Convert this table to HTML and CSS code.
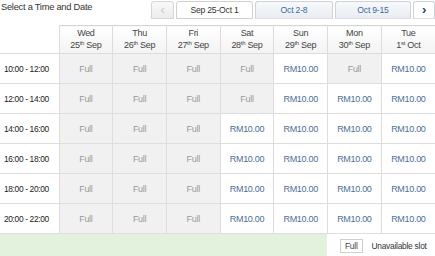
FILE: index.html
```html
<!DOCTYPE html>
<html>
<head>
<meta charset="utf-8">
<link rel="stylesheet" href="styles.css">
</head>
<body>
<div class="top">
  <div class="title">Select a Time and Date</div>
  <div class="tabs">
    <div class="tab arrow prev">&#x2039;</div>
    <div class="tab active wk1">Sep 25-Oct 1</div>
    <div class="tab wk2">Oct 2-8</div>
    <div class="tab wk3">Oct 9-15</div>
    <div class="tab arrow next">&#x203A;</div>
  </div>
</div>
<table class="grid">
  <colgroup><col class="c-time"><col><col><col><col><col><col><col></colgroup>
  <thead>
    <tr>
      <th class="blank"></th>
      <th>Wed<br>25<sup>th</sup> Sep</th>
      <th>Thu<br>26<sup>th</sup> Sep</th>
      <th>Fri<br>27<sup>th</sup> Sep</th>
      <th>Sat<br>28<sup>th</sup> Sep</th>
      <th>Sun<br>29<sup>th</sup> Sep</th>
      <th>Mon<br>30<sup>th</sup> Sep</th>
      <th>Tue<br>1<sup>st</sup> Oct</th>
    </tr>
  </thead>
  <tbody>
    <tr><td class="time">10:00 - 12:00</td><td class="full">Full</td><td class="full">Full</td><td class="full">Full</td><td class="full">Full</td><td class="price">RM10.00</td><td class="full">Full</td><td class="price">RM10.00</td></tr>
    <tr><td class="time">12:00 - 14:00</td><td class="full">Full</td><td class="full">Full</td><td class="full">Full</td><td class="full">Full</td><td class="price">RM10.00</td><td class="price">RM10.00</td><td class="price">RM10.00</td></tr>
    <tr><td class="time">14:00 - 16:00</td><td class="full">Full</td><td class="full">Full</td><td class="full">Full</td><td class="price">RM10.00</td><td class="price">RM10.00</td><td class="price">RM10.00</td><td class="price">RM10.00</td></tr>
    <tr><td class="time">16:00 - 18:00</td><td class="full">Full</td><td class="full">Full</td><td class="full">Full</td><td class="price">RM10.00</td><td class="price">RM10.00</td><td class="price">RM10.00</td><td class="price">RM10.00</td></tr>
    <tr><td class="time">18:00 - 20:00</td><td class="full">Full</td><td class="full">Full</td><td class="full">Full</td><td class="price">RM10.00</td><td class="price">RM10.00</td><td class="price">RM10.00</td><td class="price">RM10.00</td></tr>
    <tr><td class="time">20:00 - 22:00</td><td class="full">Full</td><td class="full">Full</td><td class="full">Full</td><td class="price">RM10.00</td><td class="price">RM10.00</td><td class="price">RM10.00</td><td class="price">RM10.00</td></tr>
  </tbody>
</table>
<div class="footer">
  <div class="green"></div>
  <div class="legend">
    <span class="legend-box">Full</span>
    <span class="legend-text">Unavailable slot</span>
  </div>
</div>
</body>
</html>
```

FILE: styles.css
```css
html, body {
  margin: 0;
  padding: 0;
  background: #fff;
  width: 435px;
  height: 256px;
  overflow: hidden;
  font-family: "Liberation Sans", Arial, sans-serif;
}

.top {
  display: flex;
  height: 25px;
}

.title {
  font-size: 9.3px;
  letter-spacing: -0.25px;
  color: #333;
  padding: 2px 0 0 1px;
}

.tabs {
  margin-left: auto;
  display: flex;
  gap: 2px;
  padding-top: 1px;
}

.tab {
  height: 16px;
  line-height: 16px;
  border: 1px solid #cfd3d8;
  border-bottom-color: #dde;
  border-radius: 3px 3px 0 0;
  font-size: 8.6px;
  letter-spacing: -0.2px;
  text-align: center;
  color: #3d6a9e;
  background: linear-gradient(#f7f9fb, #e9edf3);
  box-sizing: content-box;
}

.tab.active {
  background: #fff;
  color: #333;
  border-color: #d0d0d0;
}

.wk1 { width: 75px; }
.wk2 { width: 76px; }
.wk3 { width: 74px; }

.arrow {
  width: 22px;
  font-size: 13px;
  line-height: 15px;
}

.prev {
  width: 21px;
  color: #c4c8cd;
  background: linear-gradient(#f9f9f9, #ececec);
  border-color: #d6d6d6;
}

.next {
  width: 20px;
  color: #1e3f72;
  font-weight: bold;
  background: #fff;
}

.grid {
  width: 435px;
  table-layout: fixed;
  border-collapse: collapse;
  font-size: 9px;
  letter-spacing: -0.3px;
}

.c-time { width: 59px; }

.grid th {
  height: 27px;
  padding: 0;
  font-weight: normal;
  color: #444;
  line-height: 11.5px;
  border: 1px solid #dcdcdc;
  border-top-color: #d4d4d4;
  background: linear-gradient(#ffffff, #f3f3f3);
  vertical-align: middle;
}

.grid th.blank {
  border-top: none;
  border-left: none;
  background: #fff;
}

.grid sup {
  font-size: 6px;
  line-height: 0;
  vertical-align: 3px;
}

.grid td {
  height: 29px;
  padding: 0;
  text-align: center;
  border: 1px solid #dedede;
}

.grid td.time {
  border-left: none;
  color: #222;
  font-size: 8.4px;
  letter-spacing: -0.35px;
  text-align: left;
  padding-left: 4px;
}

.grid td.full {
  background: #f1f1f1;
  color: #9a9a9a;
}

.grid td.price {
  background: #fff;
  color: #4a6f9c;
}

.grid tr > :last-child {
  border-right: none;
}

.footer {
  display: flex;
  height: 23px;
}

.green {
  width: 327px;
  background: #e2f2dd;
}

.legend {
  flex: 1;
  display: flex;
  align-items: center;
  padding-left: 13px;
  gap: 9px;
  font-size: 8.4px;
  letter-spacing: -0.25px;
  color: #333;
}

.legend-box {
  border: 1px solid #cfcfcf;
  padding: 1px 4px;
  line-height: 10px;
  color: #444;
  background: #fff;
}
```
